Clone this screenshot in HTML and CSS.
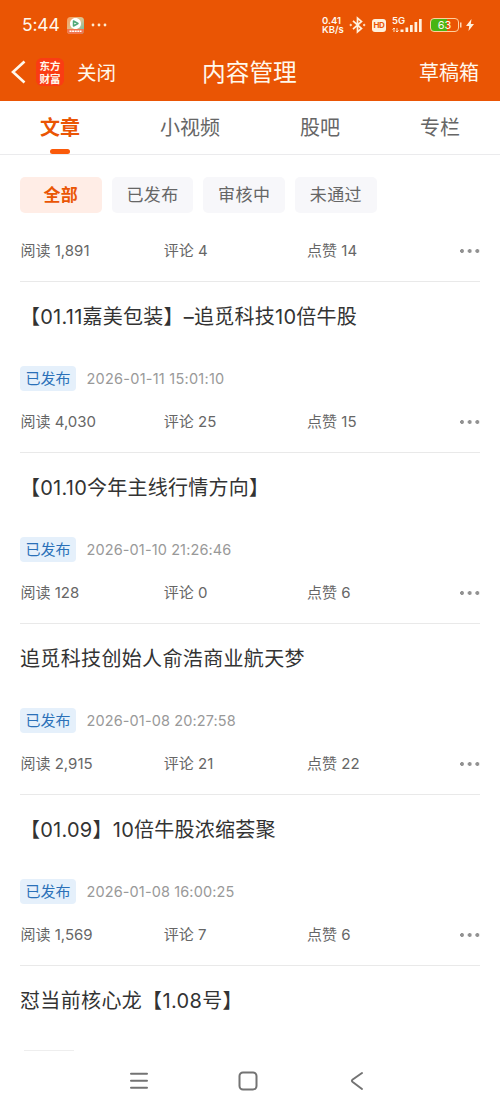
FILE: index.html
```html
<!DOCTYPE html>
<html lang="zh-CN">
<head>
<meta charset="utf-8">
<title>内容管理</title>
<link rel="stylesheet" href="styles.css">
</head>
<body>
<header class="top">
  <div class="status">
    <span class="clock">5:44</span>
    <svg class="app" width="17" height="17" viewBox="0 0 17 17">
      <defs><linearGradient id="g" x1="0" y1="0" x2="1" y2="1"><stop offset="0" stop-color="#fb9a5c"/><stop offset=".5" stop-color="#d9c492"/><stop offset="1" stop-color="#52bda0"/></linearGradient></defs>
      <rect width="17" height="17" rx="3.500" fill="url(#g)"/>
      <path d="M0 12h17v1.500a3.500 3.500 0 0 1-3.500 3.500h-10A3.500 3.500 0 0 1 0 13.500z" fill="#f2754f"/>
      <path d="M8.500 1C12 1 14 3.500 14 6.500s-2 5.500-5.500 5.500S3 9.500 3 6.500 5 1 8.500 1z" fill="#fff"/>
      <path d="M6.500 4 11 6.500 6.500 9z" fill="none" stroke="#50a979" stroke-width="1.500" stroke-linejoin="round"/>
      <path d="M2.500 14.300h12" stroke="#fff" stroke-width="1.600" stroke-dasharray="2 .6"/>
    </svg>
    <svg class="more-apps" width="16" height="4" viewBox="0 0 16 4" fill="#ffe9cf"><circle cx="2" cy="2" r="1.400"/><circle cx="8" cy="2" r="1.400"/><circle cx="14" cy="2" r="1.400"/></svg>
    <div class="speed"><span>0.41</span><span>KB/s</span></div>
    <svg class="bt" width="17" height="18" viewBox="0 0 17 18" fill="none" stroke="#fff0dc" stroke-width="1.700"><path d="M4 4.800 12.500 12.500 8.500 16V2l4 3.500L4 13.200"/><circle cx="1.700" cy="9" r=".8" fill="#fff0dc" stroke-width=".8"/><circle cx="15.200" cy="9" r=".8" fill="#fff0dc" stroke-width=".8"/></svg>
    <div class="hd">HD</div>
    <div class="signal">
      <span class="net">5G</span>
      <svg width="31" height="18" viewBox="0 0 31 18" fill="#fff0dc"><path d="M8.500 13.500h3V16h-3zM13.500 11.500h2.700V16h-2.700zM18 9h2.700v7H18zM22.500 6h2.700v10h-2.700zM27 3h2.700v13H27z"/><path d="M2 16v-4M.5 13.500 2 12l1 1M5 12v4M3.800 14.800 5 16l1.500-1.500" fill="none" stroke="#fff0dc" stroke-width=".9"/></svg>
    </div>
    <div class="battery"><span>63</span></div>
    <svg class="nub" width="3" height="6" viewBox="0 0 3 6"><path d="M0 .5h1.500v5H0z" fill="#ffd9b5"/></svg>
    <svg class="bolt" width="10" height="14" viewBox="0 0 10 14"><path d="M6.500 1 1 8h3.200L3.500 13l5.500-7H5.800z" fill="#fff0dc"/></svg>
  </div>
  <nav class="titlebar">
    <svg class="back" width="16" height="24" viewBox="0 0 16 24" fill="none" stroke="#fff8ec" stroke-width="2.600"><path d="M14.500 1.500 3 12l11.500 10.500"/></svg>
    <div class="brand"><span>东方</span><span>财富</span></div>
    <span class="close">关闭</span>
    <h1>内容管理</h1>
    <span class="drafts">草稿箱</span>
  </nav>
</header>
<nav class="tabs">
  <span class="tab active">文章</span><span class="tab">小视频</span><span class="tab">股吧</span><span class="tab">专栏</span>
</nav>
<div class="filters">
  <span class="chip on">全部</span><span class="chip">已发布</span><span class="chip">审核中</span><span class="chip">未通过</span>
</div>
<main class="list">
  <article class="item partial">
    <div class="stats"><span>阅读 1,891</span><span>评论 4</span><span>点赞 14</span><i class="dots"></i></div>
  </article>
  <article class="item">
    <h2 class="bracketed">【01.11嘉美包装】–追觅科技10倍牛股</h2>
    <div class="meta"><span class="badge">已发布</span><time class="wide">2026-01-11 15:01:10</time></div>
    <div class="stats"><span>阅读 4,030</span><span>评论 25</span><span>点赞 15</span><i class="dots"></i></div>
  </article>
  <article class="item">
    <h2 class="bracketed">【01.10今年主线行情方向】</h2>
    <div class="meta"><span class="badge">已发布</span><time>2026-01-10 21:26:46</time></div>
    <div class="stats"><span>阅读 128</span><span>评论 0</span><span>点赞 6</span><i class="dots"></i></div>
  </article>
  <article class="item">
    <h2>追觅科技创始人俞浩商业航天梦</h2>
    <div class="meta"><span class="badge">已发布</span><time>2026-01-08 20:27:58</time></div>
    <div class="stats"><span>阅读 2,915</span><span>评论 21</span><span>点赞 22</span><i class="dots"></i></div>
  </article>
  <article class="item">
    <h2 class="bracketed">【01.09】10倍牛股浓缩荟聚</h2>
    <div class="meta"><span class="badge">已发布</span><time>2026-01-08 16:00:25</time></div>
    <div class="stats"><span>阅读 1,569</span><span>评论 7</span><span>点赞 6</span><i class="dots"></i></div>
  </article>
  <article class="item last">
    <h2>怼当前核心龙【1.08号】</h2>
    <div class="cut"></div>
  </article>
</main>
<footer class="sysnav">
  <svg width="234" height="20" viewBox="0 0 234 20" fill="none" stroke="#737373" stroke-width="2" stroke-linecap="round" stroke-linejoin="round"><path d="M1 2.700h16M1 9.700h16M1 16.700h16"/><rect x="109.500" y="1.500" width="17" height="17" rx="3.500"/><path d="M232 2 222.700 8.500q-1.600 1.200 0 2.500L232 18"/></svg>
</footer>
</body>
</html>
```
FILE: styles.css
```css
* { box-sizing: border-box; }
body {
  margin: 0;
  width: 500px;
  height: 1111px;
  overflow: hidden;
  display: flex;
  flex-direction: column;
  background: #fff;
  color: #666;
  font-family: Inter, "Noto Sans CJK SC", sans-serif;
}
h1, h2 { margin: 0; font-weight: 400; }
svg { display: block; flex: none; }
.top { height: 101px; background: #ea5504; color: #fff8ec; flex: none; }
.status { height: 43px; padding: 7px 0 0 22px; display: flex; align-items: center; }
.clock { width: 45px; font-size: 17.500px; letter-spacing: -0.2px; line-height: 20px; }
.more-apps { margin-left: 7px; }
.speed { margin-left: 215px; width: 27px; display: flex; flex-direction: column; font-size: 9.500px; font-weight: 600; line-height: 9px; white-space: nowrap; }
.bt { margin-left: 0; }
.hd { margin-left: 6px; width: 14px; height: 13px; border-radius: 3px; background: #fff0dc; color: #ea5504; font-size: 8px; font-weight: 700; line-height: 13px; text-align: center; letter-spacing: -0.4px; }
.signal { position: relative; margin-left: 6px; }
.net { position: absolute; left: 0; top: 0; font-size: 9.500px; font-weight: 600; line-height: 9px; }
.battery { margin-left: 7px; width: 29px; height: 14px; border: 1.500px solid #ffcf9e; border-radius: 4px; background: linear-gradient(90deg, #48b514 60%, #ea5504 60%); font-size: 11px; line-height: 12px; text-align: center; }
.nub { margin-left: 1px; }
.bolt { margin-left: 2px; }
.titlebar { height: 56px; display: flex; align-items: center; padding: 0 21px 0 10px; }
.back { margin-top: 2px; }
.brand { margin: 2px 0 0 10px; width: 28px; height: 28px; border-radius: 6px; background: #fa3c13; display: flex; flex-direction: column; align-items: center; justify-content: center; font: 700 10.500px/13px "Noto Sans CJK SC", sans-serif; }
.close { margin-left: 13px; font-size: 19.500px; }
.titlebar h1 { margin-left: 86px; font-size: 23.700px; }
.drafts { margin-left: auto; font-size: 20px; }
.tabs { height: 54px; display: flex; justify-content: space-between; padding: 0 40px; border-bottom: 1px solid #ebebed; flex: none; }
.tab { font-size: 20px; line-height: 54px; position: relative; }
.tab.active { color: #ea5504; font-weight: 700; }
.tab.active::after { content: ""; position: absolute; left: 10px; bottom: 0; width: 20px; height: 5px; border-radius: 2.500px; background: #fa5a0a; }
.filters { display: flex; gap: 10px; padding: 22px 20px 0; flex: none; }
.chip { width: 81.700px; height: 36px; border-radius: 5px; background: #f7f7fa; font-size: 17px; line-height: 36px; text-align: center; letter-spacing: .4px; }
.chip.on { background: #ffede6; color: #ea5504; font-weight: 700; }
.list { padding: 0 20px; }
.item { height: 171px; border-bottom: 1px solid #e9e9e9; }
.partial { height: 69px; padding-top: 25px; }
.item h2 { height: 84px; padding-top: 19px; color: #333; font-size: 20px; line-height: 32px; letter-spacing: .35px; white-space: nowrap; }
.item .bracketed { letter-spacing: .25px; }
.meta { height: 25px; display: flex; align-items: center; gap: 10.500px; }
.badge { width: 56px; height: 25px; border-radius: 4px; background: #e5f0fb; color: #2b70b8; font-size: 15px; line-height: 25px; text-align: center; }
.meta time { color: #999; font-size: 14.500px; line-height: 25px; letter-spacing: .12px; }
.meta .wide { letter-spacing: .25px; }
.stats { display: flex; align-items: center; height: 26px; font-size: 15px; line-height: 26px; padding-left: .5px; }
.meta + .stats { margin-top: 18px; }
.stats span { width: 143.300px; white-space: nowrap; }
.dots { width: 20px; height: 4px; margin-left: auto; background: radial-gradient(circle at 2px 2px, #929292 1.700px, transparent 2.200px) 0 0 / 7.700px 4px; }
.last { height: auto; border: 0; }
.cut { width: 50px; height: 1px; margin-left: 4px; background: #eee; }
.sysnav { margin-top: 20px; padding-left: 130px; }
```
